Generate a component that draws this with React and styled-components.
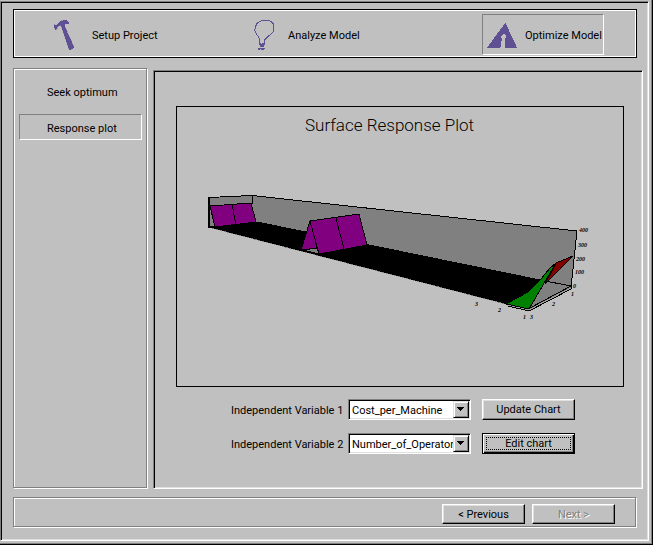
import React, { useState } from "react";
import styled, { createGlobalStyle, css } from "styled-components";

const face = "#c0c0c0";
const shade = "#808080";
const light = "#dfdfdf";
const violet = "#5f4f93";

const GlobalStyle = createGlobalStyle`
  *, *::before, *::after { box-sizing: border-box; }
  body { margin: 0; background: ${face}; }
  body, button, select {
    font-family: Roboto, "Liberation Sans", Arial, sans-serif;
    font-size: 11px;
    line-height: 13px;
    color: #000;
  }
`;

const sunken = css`
  border: 1px solid;
  border-color: ${shade} #fff #fff ${shade};
  box-shadow: inset 1px 1px #000, inset -1px -1px ${light};
`;

const etched = css`
  border: 1px solid;
  border-color: ${shade} #fff #fff ${shade};
  box-shadow: inset -1px -1px ${shade}, inset 1px 1px #fff;
`;

const Window = styled.div`
  display: flex;
  min-height: 100vh;
  padding: 1px 3px 3px 0;
  background: ${face};
  border: solid #000;
  border-width: 0 1px 1px 0;
  box-shadow: inset -1px -1px ${shade};
`;

const Client = styled.div`
  ${sunken}
  flex: 1;
  min-width: 0;
  display: flex;
  flex-direction: column;
  padding: 7px 5px 12px 12px;
`;

const Toolbar = styled.nav`
  display: grid;
  grid-template-columns: 196fr 237fr 153fr;
  justify-items: start;
  margin-right: 6px;
  padding: 4px 1px 2px 35px;
  border: 1px solid #000;
  box-shadow: inset 0 0 0 1px #fff;
`;

const Tab = styled.button`
  display: flex;
  align-items: center;
  gap: 8px;
  height: 41px;
  padding: 0 1px 0 4px;
  background: none;
  white-space: nowrap;
  border: 1px solid;
  border-color: ${(p) =>
    p.$active ? `${shade} #fff #fff ${shade}` : "transparent"};
`;

const TabText = styled.span`
  padding-top: 2px;
`;

const Body = styled.div`
  flex: 1;
  display: flex;
  gap: 5px;
  margin: 10px 0 8px;
`;

const Sidebar = styled.aside`
  ${etched}
  flex: 0 0 135px;
  display: flex;
  flex-direction: column;
  gap: 10px;
  padding: 9px 5px;
`;

const SideItem = styled.button`
  height: 26px;
  padding: 2px 0 0 27px;
  text-align: left;
  background: none;
  border: 1px solid;
  border-color: ${(p) =>
    p.$active ? `${shade} #fff #fff ${shade}` : "transparent"};
`;

const Main = styled.main`
  ${sunken}
  flex: 1;
  min-width: 0;
  margin-top: 2px;
  padding: 35px 18px 16px 22px;
`;

const ChartPanel = styled.section`
  border: 1px solid #000;
`;

const ChartTitle = styled.h1`
  margin: 0;
  padding: 7px 21px 1px 0;
  font-size: 17px;
  line-height: 22px;
  font-weight: 300;
  text-align: center;
`;

const Plot = styled.svg`
  display: block;
  width: 100%;
  height: auto;
`;

const AxisText = styled.text`
  font: italic bold 6px "Liberation Serif", serif;
`;

const Form = styled.div`
  display: grid;
  grid-template-columns: 117px 123px 93px;
  row-gap: 13px;
  align-items: center;
  margin-top: 12px;
  padding-left: 55px;
`;

const FieldLabel = styled.label`
  padding-top: 2px;
  white-space: nowrap;
`;

const SelectBox = styled.div`
  ${sunken}
  position: relative;
  height: 21px;
  background: #fff;
`;

const Select = styled.select`
  appearance: none;
  display: block;
  width: 100%;
  height: 19px;
  padding: 1px 16px 0 3px;
  background: none;
  border: 0;
  border-radius: 0;
`;

const DropArrow = styled.svg`
  position: absolute;
  top: 1px;
  right: 1px;
  width: 16px;
  height: 17px;
  pointer-events: none;
  background: ${face};
  border: 1px solid;
  border-color: ${light} #000 #000 ${light};
  box-shadow: inset 1px 1px #fff, inset -1px -1px ${shade};
`;

const PushButton = styled.button`
  width: ${(p) => (p.$wide ? 93 : 83)}px;
  height: ${(p) => (p.$wide ? 21 : 20)}px;
  margin-left: ${(p) => (p.$wide ? 11 : 0)}px;
  padding: 0;
  background: ${face};
  border: 1px solid;
  border-color: #fff #000 #000 #fff;
  box-shadow: inset -1px -1px ${shade}, inset 1px 1px ${light};
  ${(p) =>
    p.$default &&
    css`
      border-color: #000;
      box-shadow: inset 1px 1px #fff, inset -1px -1px #000,
        inset -2px -2px ${shade};
      outline: 1px dotted #000;
      outline-offset: -5px;
    `}
  &:disabled {
    color: ${shade};
    text-shadow: 1px 1px #fff;
  }
`;

const Footer = styled.footer`
  ${etched}
  display: flex;
  justify-content: flex-end;
  gap: 7px;
  margin-right: 6px;
  padding: 6px 21px 3px;
`;

const HammerIcon = () => (
  <svg width="30" height="30" viewBox="42 26 90 90" fill={violet} stroke={violet} strokeWidth="1" shapeRendering="crispEdges" aria-hidden="true">
    <path d="M42 39L45 42H50L60 31L66 28L79 26L86 33V37L75 37L73 41L83 65L102 107L98 112L92 116H88L65 47L62 42L54 45L50 54L46 55L42 46Z" />
  </svg>
);

const BulbIcon = () => (
  <svg width="30" height="30" viewBox="14 26 90 90" fill="none" stroke={violet} strokeWidth="3" shapeRendering="crispEdges" aria-hidden="true">
    <path d="M43 95V83L33 67Q27 62 29 52Q32 34 46 29Q56 25 73 29Q87 34 86 48Q86 62 78 67L64 79L58 86V96" />
    <path strokeWidth="4" d="M40 96H46M50 96H58M41 100H58M43 104H56" />
    <path d="M38 110H58M38 114H44M48 114H56" />
  </svg>
);

const RoadIcon = () => (
  <svg width="30" height="30" viewBox="21 26 90 90" fill={violet} shapeRendering="crispEdges" aria-hidden="true">
    <path d="M76 34L111 109H74V79H78V74L72 67L62 77V81H66L64 92L61 109H21Z" />
  </svg>
);

const axisLabels = [
  [579, 232, "400"], [578, 247, "300"], [576, 261, "200"],
  [575, 274, "100"], [573, 288, "0"], [475, 306, "3"],
  [498, 312, "2"], [523, 319, "1"], [530, 319, "3"],
  [552, 306, "2"], [571, 296, "1"],
];

const SurfacePlot = () => (
  <Plot viewBox="177 137 446 249" role="img" aria-label="Surface response chart">
    <g shapeRendering="crispEdges" stroke="#000" strokeWidth="1" strokeLinejoin="round">
      <path fill={shade} d="M209 197.500L252 195.500L577 231L571 288L530 310L209 227Z" />
      <path fill="#000" d="M209 227L257 222L540 280L529 309Z" />
      <path fill="none" d="M252 196V204M540 280L571 286M530 308L571 286" />
      <path fill="none" stroke={shade} strokeDasharray="2 2" d="M212 228L529 310" />
      <path fill="none" stroke="#a0a0a0" d="M508 305L529 310L571 288" />
      <path fill="none" d="M508 306L529 311L572 288.500" />
      <path fill="none" strokeWidth="2" d="M209 197V228" />
      <path fill="#800080" d="M210 206L251 203L256 222L215 227Z" />
      <path fill="none" d="M232 204L236 225" />
      <path fill="#800080" d="M310 221L301 250L317 248L312 226Z" />
      <path fill={shade} d="M303 250L317 248L319 254Z" />
      <path fill="#800080" d="M310 221L359 214L367 245L319 254Z" />
      <path fill="none" d="M336 218L344 249" />
      <path fill="#008000" d="M506 304L528 292L541 279L550 268L556 263L543 285L529 309Z" />
      <path fill="#800000" d="M556 263L573 256L545 284Z" />
    </g>
    {axisLabels.map(([x, y, label]) => (
      <AxisText key={`${x}-${y}`} x={x} y={y}>{label}</AxisText>
    ))}
  </Plot>
);

const tabs = [
  ["Setup Project", HammerIcon],
  ["Analyze Model", BulbIcon],
  ["Optimize Model", RoadIcon],
];

const variables = ["Cost_per_Machine", "Number_of_Operator"];

const VariableField = ({ id, label, initial }) => {
  const [value, setValue] = useState(initial);
  return (
    <>
      <FieldLabel htmlFor={id}>{label}</FieldLabel>
      <SelectBox>
        <Select id={id} value={value} onChange={(e) => setValue(e.target.value)}>
          {variables.map((name) => (
            <option key={name}>{name}</option>
          ))}
        </Select>
        <DropArrow viewBox="0 0 14 15" shapeRendering="crispEdges" aria-hidden="true">
          <path d="M3 5H10V6H9V7H8V8H7V9H6V8H5V7H4V6H3Z" />
        </DropArrow>
      </SelectBox>
    </>
  );
};

export default function App() {
  const [tab, setTab] = useState("Optimize Model");
  const [page, setPage] = useState("Response plot");
  return (
    <>
      <GlobalStyle />
      <Window>
        <Client>
          <Toolbar>
            {tabs.map(([name, Icon]) => (
              <Tab key={name} type="button" $active={tab === name} onClick={() => setTab(name)}>
                <Icon />
                <TabText>{name}</TabText>
              </Tab>
            ))}
          </Toolbar>
          <Body>
            <Sidebar>
              {["Seek optimum", "Response plot"].map((name) => (
                <SideItem key={name} type="button" $active={page === name} onClick={() => setPage(name)}>
                  {name}
                </SideItem>
              ))}
            </Sidebar>
            <Main>
              <ChartPanel>
                <ChartTitle>Surface Response Plot</ChartTitle>
                <SurfacePlot />
              </ChartPanel>
              <Form>
                <VariableField id="variable-1" label="Independent Variable 1" initial={variables[0]} />
                <PushButton type="button" $wide>Update Chart</PushButton>
                <VariableField id="variable-2" label="Independent Variable 2" initial={variables[1]} />
                <PushButton type="button" $wide $default>Edit chart</PushButton>
              </Form>
            </Main>
          </Body>
          <Footer>
            <PushButton type="button">&lt; Previous</PushButton>
            <PushButton type="button" disabled>Next &gt;</PushButton>
          </Footer>
        </Client>
      </Window>
    </>
  );
}
